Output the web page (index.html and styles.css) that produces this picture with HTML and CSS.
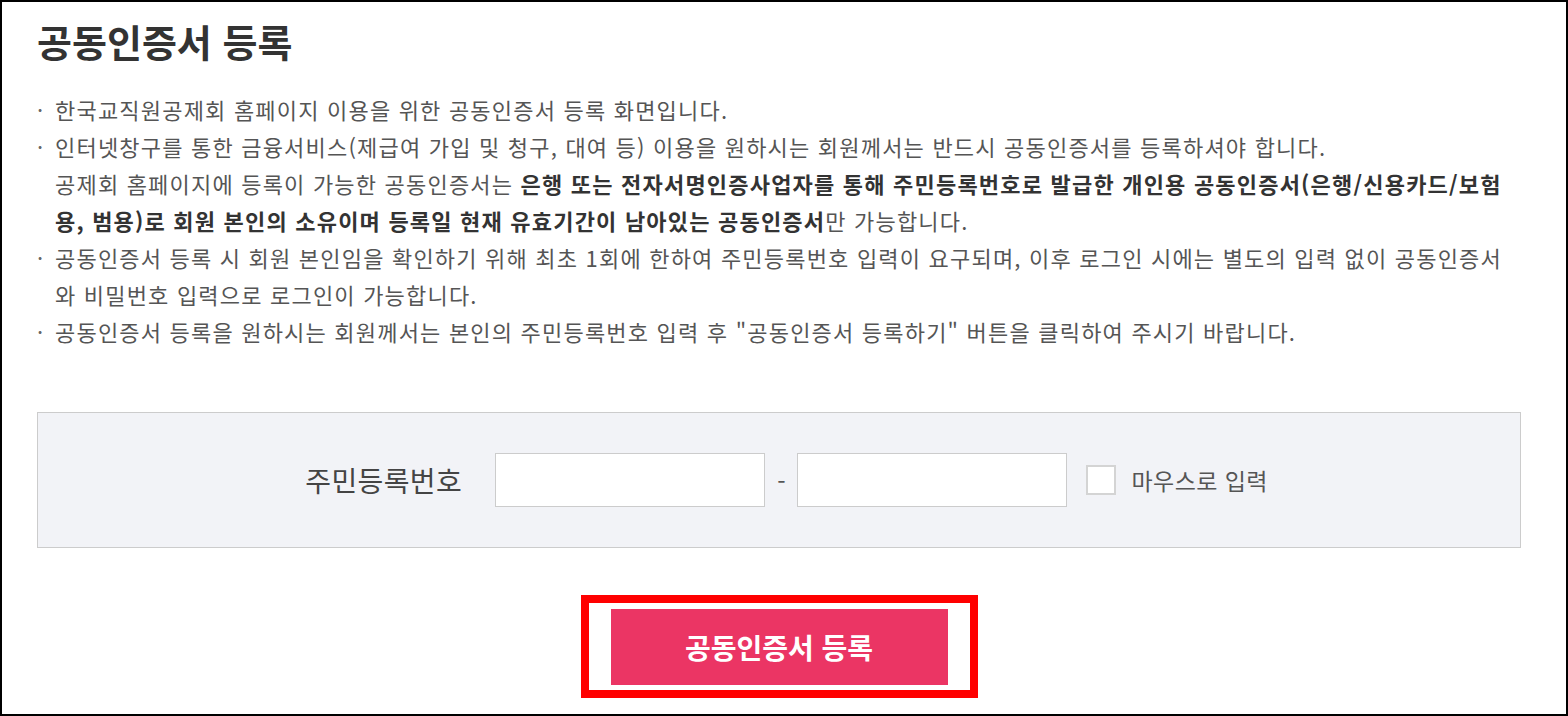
FILE: index.html
```html
<!DOCTYPE html>
<html lang="ko">
<head>
    <meta charset="UTF-8">
    <meta name="viewport" content="width=device-width, initial-scale=1.0">
    <title>공동인증서 등록</title>
    <link rel="stylesheet" href="styles.css">
</head>
<body>

<div class="page">
    <h1>공동인증서 등록</h1>

    <ul class="guide">
        <li>한국교직원공제회 홈페이지 이용을 위한 공동인증서 등록 화면입니다.</li>
        <li>인터넷창구를 통한 금융서비스(제급여 가입 및 청구, 대여 등) 이용을 원하시는 회원께서는 반드시 공동인증서를 등록하셔야 합니다.<br>
            공제회 홈페이지에 등록이 가능한 공동인증서는 <strong>은행 또는 전자서명인증사업자를 통해 주민등록번호로 발급한 개인용 공동인증서(은행/신용카드/보험용, 범용)로 회원 본인의 소유이며 등록일 현재 유효기간이 남아있는 공동인증서</strong>만 가능합니다.</li>
        <li>공동인증서 등록 시 회원 본인임을 확인하기 위해 최초 1회에 한하여 주민등록번호 입력이 요구되며, 이후 로그인 시에는 별도의 입력 없이 공동인증서와 비밀번호 입력으로 로그인이 가능합니다.</li>
        <li>공동인증서 등록을 원하시는 회원께서는 본인의 주민등록번호 입력 후 "공동인증서 등록하기" 버튼을 클릭하여 주시기 바랍니다.</li>
    </ul>

    <div class="form-box">
        <div class="form-row">
            <label class="form-label" for="jumin1">주민등록번호</label>
            <input type="text" id="jumin1" class="jumin">
            <span class="dash">-</span>
            <input type="password" id="jumin2" class="jumin">
            <label class="mouse">
                <input type="checkbox" id="mouseInput">
                <span class="check-box"></span>
                <span>마우스로 입력</span>
            </label>
        </div>
    </div>

    <div class="btn-area">
        <div class="highlight">
            <button class="btn-register">공동인증서 등록</button>
        </div>
    </div>
</div>

</body>
</html>
```

FILE: styles.css
```css
body {
    margin: 0;
    font-family: "Noto Sans CJK KR", "Noto Sans", sans-serif;
    color: #555;
}
.page {
    height: 716px;
    box-sizing: border-box;
    border: 2px solid #000;
    padding: 0 45px 0 35px;
    overflow: hidden;
}
h1 {
    margin: 16px 0 0;
    font-size: 38px;
    line-height: 46px;
    font-weight: 700;
    color: #333;
}
.guide {
    list-style: none;
    margin: 27px 0 0;
    padding: 0;
    font-size: 22px;
    line-height: 37px;
    letter-spacing: 1.2px;
    word-break: break-all;
}
.guide li {
    position: relative;
    padding-left: 18px;
}
.guide li::before {
    content: "·";
    position: absolute;
    left: 0;
    top: 0;
    color: #666;
}
.guide strong {
    color: #333;
    font-weight: 700;
}
.form-box {
    margin-top: 62px;
    height: 136px;
    box-sizing: border-box;
    border: 1px solid #ccc;
    background-color: #f2f3f7;
    display: flex;
    align-items: center;
    justify-content: center;
}
.form-row {
    display: flex;
    align-items: center;
    padding-left: 15px;
}
.form-label {
    font-size: 28px;
    letter-spacing: 0.4px;
    color: #444;
    margin-right: 33px;
}
.jumin {
    width: 270px;
    height: 54px;
    box-sizing: border-box;
    border: 1px solid #ccc;
    background: #fff;
    padding: 0 10px;
    font-size: 18px;
}
.dash {
    font-size: 24px;
    color: #555;
    margin: 0 11px 0 12px;
}
.mouse {
    display: flex;
    align-items: center;
    margin-left: 19px;
    font-size: 23px;
    letter-spacing: 0.4px;
    color: #555;
}
.mouse input {
    display: none;
}
.check-box {
    width: 30px;
    height: 30px;
    box-sizing: border-box;
    border: 2px solid #d4d4d4;
    background: #fff;
    margin-right: 16px;
}
.btn-area {
    margin-top: 47px;
    display: flex;
    justify-content: center;
}
.highlight {
    border: 8px solid #ff0000;
    padding: 6px 22px 5px;
}
.btn-register {
    display: block;
    width: 337px;
    height: 76px;
    border: none;
    background-color: #eb3564;
    color: #fff;
    font-family: inherit;
    font-size: 28px;
    font-weight: 700;
    cursor: pointer;
}
```
